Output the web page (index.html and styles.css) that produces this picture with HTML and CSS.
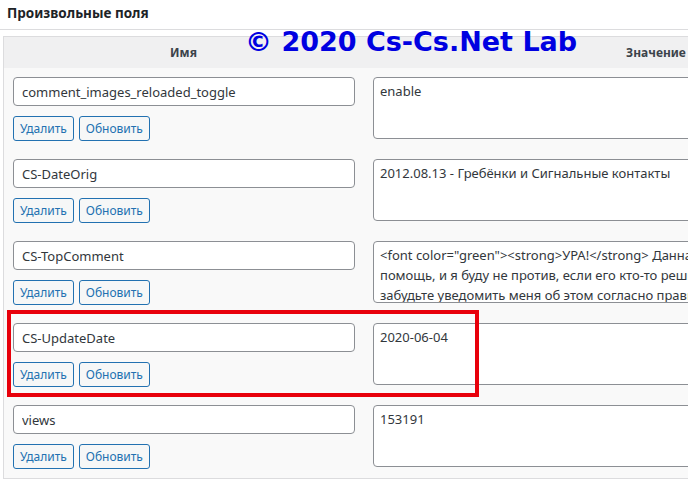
FILE: index.html
```html
<!DOCTYPE html>
<html lang="ru">
<head>
<meta charset="utf-8">
<title>Произвольные поля</title>
<link rel="stylesheet" href="styles.css">
</head>
<body>
<div class="page">
  <h2 class="title">Произвольные поля</h2>
  <div class="metabox">
    <div class="thead">
      <div class="th th-name">Имя</div>
      <div class="th th-value">Значение</div>
    </div>
    <div class="row">
      <div class="cell-name">
        <input class="key" type="text" value="comment_images_reloaded_toggle">
        <div class="buttons"><button class="btn">Удалить</button><button class="btn">Обновить</button></div>
      </div>
      <div class="cell-value"><textarea class="val" wrap="off">enable</textarea></div>
    </div>
    <div class="row">
      <div class="cell-name">
        <input class="key" type="text" value="CS-DateOrig">
        <div class="buttons"><button class="btn">Удалить</button><button class="btn">Обновить</button></div>
      </div>
      <div class="cell-value"><textarea class="val" wrap="off">2012.08.13 - Гребёнки и Сигнальные контакты</textarea></div>
    </div>
    <div class="row">
      <div class="cell-name">
        <input class="key" type="text" value="CS-TopComment">
        <div class="buttons"><button class="btn">Удалить</button><button class="btn">Обновить</button></div>
      </div>
      <div class="cell-value"><textarea class="val" wrap="off">&lt;font color="green"&gt;&lt;strong&gt;УРА!&lt;/strong&gt; Данная задача ещё ждёт вашей
помощь, и я буду не против, если его кто-то решит раньше меня. Только не
забудьте уведомить меня об этом согласно правилам сайта.&lt;/font&gt;</textarea></div>
    </div>
    <div class="row">
      <div class="cell-name">
        <input class="key" type="text" value="CS-UpdateDate">
        <div class="buttons"><button class="btn">Удалить</button><button class="btn">Обновить</button></div>
      </div>
      <div class="cell-value"><textarea class="val" wrap="off">2020-06-04</textarea></div>
    </div>
    <div class="row">
      <div class="cell-name">
        <input class="key" type="text" value="views">
        <div class="buttons"><button class="btn">Удалить</button><button class="btn">Обновить</button></div>
      </div>
      <div class="cell-value"><textarea class="val" wrap="off">153191</textarea></div>
    </div>
  </div>
  <div class="watermark">© 2020 Cs-Cs.Net Lab</div>
  <div class="highlight"></div>
</div>
</body>
</html>
```
FILE: styles.css
```css
html, body {
  margin: 0;
  padding: 0;
  background: #ffffff;
  overflow: hidden;
}
body {
  font-family: "Segoe UI", "Noto Sans", sans-serif;
  color: #2c3338;
}
.page {
  position: relative;
  width: 688px;
  height: 481px;
  overflow: hidden;
}
.title {
  margin: 0;
  padding: 4px 7px 0;
  height: 25px;
  font-size: 13.5px;
  font-weight: 700;
  line-height: 18px;
  color: #1d2327;
  border-bottom: 1px solid #dcdcde;
}
.metabox {
  margin: 6px 0 0 3px;
  width: 945px;
  border: 1px solid #dcdcde;
  background: #f9f9f9;
}
.thead {
  display: grid;
  grid-template-columns: 359px 1fr;
  height: 31px;
  background: #f0f0f1;
}
.th {
  font-size: 12px;
  font-weight: 700;
  color: #3c434a;
  text-align: center;
  line-height: 31px;
}
.row {
  display: grid;
  grid-template-columns: 359px 1fr;
  padding: 9px 0;
}
.cell-name {
  padding: 0 7px 0 9px;
}
.cell-value {
  padding: 0 10px;
}
.key {
  display: block;
  box-sizing: border-box;
  width: 342px;
  height: 29px;
  margin: 0;
  padding: 0 8px;
  border: 1px solid #8c8f94;
  border-radius: 4px;
  background: #ffffff;
  font-family: inherit;
  font-size: 13px;
  color: #32373c;
}
.buttons {
  display: flex;
  gap: 5px;
  margin-top: 10px;
}
.btn {
  box-sizing: border-box;
  height: 25px;
  margin: 0;
  padding: 0 6px;
  border: 1px solid #2271b1;
  border-radius: 3px;
  background: #f6f7f7;
  color: #2271b1;
  font-family: inherit;
  font-size: 12px;
  line-height: 23px;
}
.val {
  display: block;
  box-sizing: border-box;
  width: 560px;
  height: 62px;
  margin: 0;
  padding: 3px 6px;
  border: 1px solid #8c8f94;
  border-radius: 4px;
  background: #ffffff;
  font-family: inherit;
  font-size: 13px;
  line-height: 20px;
  color: #32373c;
  resize: none;
  overflow: hidden;
}
.watermark {
  position: absolute;
  left: 245px;
  top: 26px;
  font-family: "DejaVu Sans", Verdana, sans-serif;
  font-weight: 700;
  font-size: 27px;
  line-height: 32px;
  color: #0000e1;
  white-space: nowrap;
}
.highlight {
  position: absolute;
  left: 7px;
  top: 310px;
  width: 472px;
  height: 87px;
  box-sizing: border-box;
  border: 4px solid #e8000b;
}
```
